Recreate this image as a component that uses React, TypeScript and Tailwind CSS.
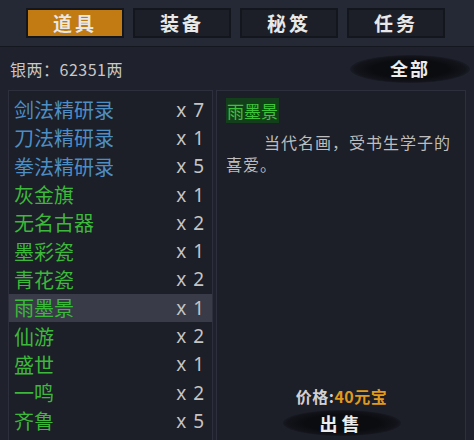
import React from "react";

const items: { name: string; count: number; color: "blue" | "green" }[] = [
  { name: "剑法精研录", count: 7, color: "blue" },
  { name: "刀法精研录", count: 1, color: "blue" },
  { name: "拳法精研录", count: 5, color: "blue" },
  { name: "灰金旗", count: 1, color: "green" },
  { name: "无名古器", count: 2, color: "green" },
  { name: "墨彩瓷", count: 1, color: "green" },
  { name: "青花瓷", count: 2, color: "green" },
  { name: "雨墨景", count: 1, color: "green" },
  { name: "仙游", count: 2, color: "green" },
  { name: "盛世", count: 1, color: "green" },
  { name: "一鸣", count: 2, color: "green" },
  { name: "齐鲁", count: 5, color: "green" },
];

const tabs = ["道具", "装备", "秘笈", "任务"];

const sans = "font-['Noto_Sans_CJK_SC','Noto_Sans',sans-serif]";

export default function App() {
  return (
    <div className={`w-[474px] h-[440px] overflow-hidden bg-[#1f212c] ${sans}`}>
      {/* header tabs */}
      <div className="h-[47px] flex items-center pl-[26px] gap-[9px] bg-[#252835] border-b border-[#15171f]">
        {tabs.map((t, i) => (
          <div
            key={t}
            className={`w-[98px] h-[30px] flex items-center justify-center border-2 border-[#14161d] text-[19px] font-bold tracking-[3px] text-[#e8e8e8] ${
              i === 0 ? "bg-[#c27a12]" : "bg-[#1d1f28]"
            }`}
          >
            {t}
          </div>
        ))}
      </div>

      {/* silver row */}
      <div className="h-[43px] flex items-center justify-between pl-[10px] pr-[4px]">
        <div className="text-[16px] text-[#c8c8c8] tracking-[0.5px]">银两：62351两</div>
        <div className="relative w-[120px] h-[28px] flex items-center justify-center">
          <div className="absolute inset-0 rounded-[50%] bg-[radial-gradient(ellipse_at_center,#0b0c10_45%,rgba(11,12,16,0.6)_65%,rgba(11,12,16,0)_75%)]" />
          <span className="relative text-[18px] font-bold text-[#ececec] tracking-[2px]">全部</span>
        </div>
      </div>

      {/* panels */}
      <div className="flex gap-[3px] pl-[8px] pr-[8px] h-[350px]">
        <div className="w-[205px] h-full bg-[#1c1e28] border border-[#2d303c] border-b-0 pt-[5px] overflow-hidden">
          {items.map((it, i) => (
            <div
              key={it.name}
              className={`h-[28.3px] shrink-0 flex items-center justify-between pl-[5px] pr-[7px] ${
                i === 7 ? "bg-[#393c48]" : ""
              }`}
            >
              <span
                className={`text-[20px] leading-none ${
                  it.color === "blue" ? "text-[#4d8fc4]" : "text-[#3cb83a]"
                }`}
              >
                {it.name}
              </span>
              <span className="text-[19px] leading-none text-[#c4c4c4] font-['Noto_Sans',sans-serif] tracking-[1px]">
                x {it.count}
              </span>
            </div>
          ))}
        </div>

        <div className="flex-1 h-full bg-[#1c1e28] border border-[#2d303c] border-b-0 flex flex-col pl-[9px] pr-[8px]">
          <div className="mt-[8px]">
            <span className="text-[17px] leading-[22px] text-[#3fc23c] bg-[#13401a] px-[1px]">雨墨景</span>
          </div>
          <div className="mt-[8px] text-[16px] leading-[22px] tracking-[1px] text-[#bdbdbd] indent-[38px]">
            当代名画，受书生学子的喜爱。
          </div>
          <div className="flex-1" />
          <div className="flex flex-col items-center pb-[4px]">
            <div className="text-[16px] font-bold leading-[20px] text-[#d0d0d0] tracking-[0.5px]">
              价格:<span className="text-[#e09a1c]">40元宝</span>
            </div>
            <div className="relative mt-[4px] w-[118px] h-[26px] flex items-center justify-center">
              <div className="absolute inset-0 rounded-[50%] bg-[radial-gradient(ellipse_at_center,#0b0c10_45%,rgba(11,12,16,0.6)_65%,rgba(11,12,16,0)_75%)]" />
              <span className="relative text-[18px] font-bold text-[#ececec] tracking-[4px]">出售</span>
            </div>
          </div>
        </div>
      </div>
    </div>
  );
}
